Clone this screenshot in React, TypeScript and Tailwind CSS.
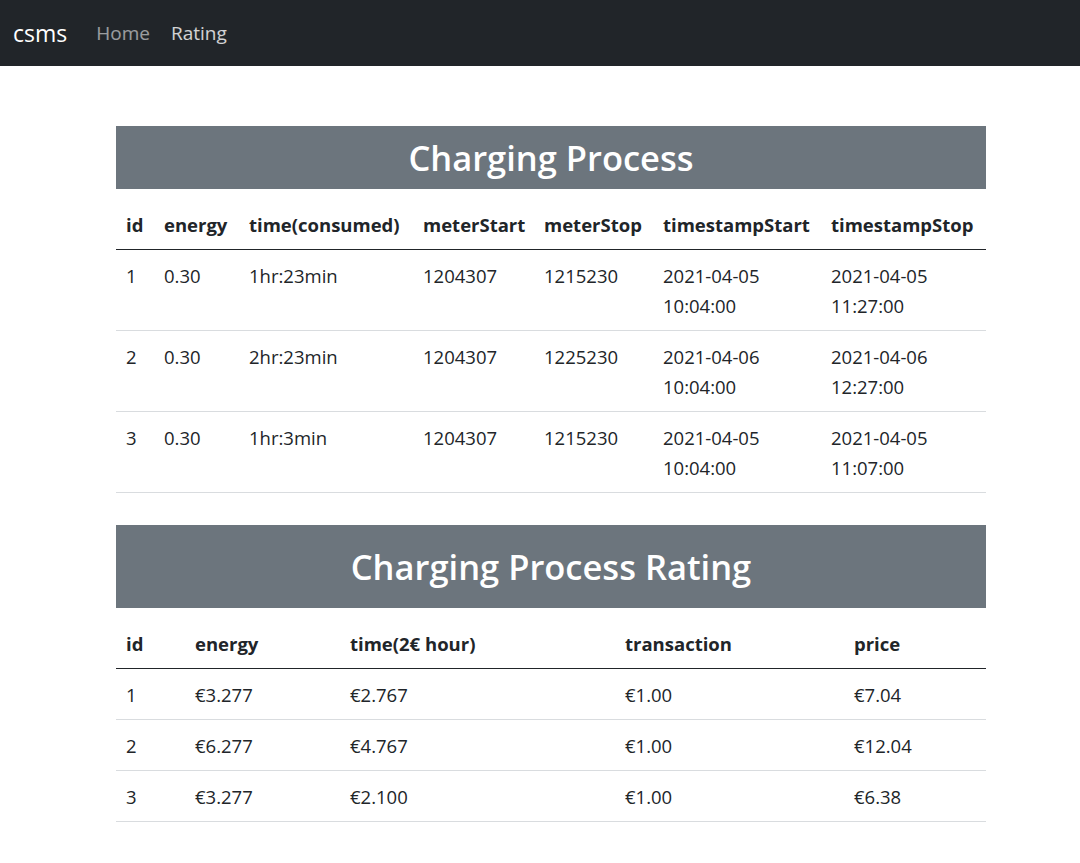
import React from "react";

const processRows = [
  { id: 1, energy: "0.30", time: "1hr:23min", meterStart: "1204307", meterStop: "1215230", start: ["2021-04-05", "10:04:00"], stop: ["2021-04-05", "11:27:00"] },
  { id: 2, energy: "0.30", time: "2hr:23min", meterStart: "1204307", meterStop: "1225230", start: ["2021-04-06", "10:04:00"], stop: ["2021-04-06", "12:27:00"] },
  { id: 3, energy: "0.30", time: "1hr:3min", meterStart: "1204307", meterStop: "1215230", start: ["2021-04-05", "10:04:00"], stop: ["2021-04-05", "11:07:00"] },
];

const ratingRows = [
  { id: 1, energy: "€3.277", time: "€2.767", transaction: "€1.00", price: "€7.04" },
  { id: 2, energy: "€6.277", time: "€4.767", transaction: "€1.00", price: "€12.04" },
  { id: 3, energy: "€3.277", time: "€2.100", transaction: "€1.00", price: "€6.38" },
];

const th = "px-[10px] pt-[11px] pb-[9px] text-left align-bottom font-bold leading-[30px]";
const td = "px-[10px] pt-[11px] pb-[9px] align-top leading-[30px]";

export default function App() {
  return (
    <div className="min-h-[863px] bg-white text-[18.5px] text-[#212529] [font-family:'Open_Sans',sans-serif]">
      {/* navbar */}
      <nav className="flex h-[66px] items-center bg-[#212529] px-[13px]">
        <a className="mr-[29px] text-[23px] text-white" href="#">
          csms
        </a>
        <div className="flex gap-[21px] text-[19px]">
          <a className="text-white/55" href="#">
            Home
          </a>
          <a className="text-white/80" href="#">
            Rating
          </a>
        </div>
      </nav>

      <main className="ml-[116px] w-[870px] pt-[60px]">
        {/* Charging Process */}
        <div className="flex h-[63px] items-center justify-center bg-[#6c757d]">
          <h3 className="text-[34.5px] font-semibold leading-[42px] text-white">Charging Process</h3>
        </div>
        <table className="mt-[10px] w-full table-fixed border-collapse">
          <colgroup>
            <col className="w-[38px]" />
            <col className="w-[85px]" />
            <col className="w-[174px]" />
            <col className="w-[121px]" />
            <col className="w-[119px]" />
            <col className="w-[168px]" />
            <col className="w-[165px]" />
          </colgroup>
          <thead>
            <tr className="border-b border-[#212529]">
              <th className={th}>id</th>
              <th className={th}>energy</th>
              <th className={th}>time(consumed)</th>
              <th className={th}>meterStart</th>
              <th className={th}>meterStop</th>
              <th className={th}>timestampStart</th>
              <th className={th}>timestampStop</th>
            </tr>
          </thead>
          <tbody>
            {processRows.map((r) => (
              <tr className="border-b border-[#d9dcdf]" key={r.id}>
                <td className={td}>{r.id}</td>
                <td className={td}>{r.energy}</td>
                <td className={td}>{r.time}</td>
                <td className={td}>{r.meterStart}</td>
                <td className={td}>{r.meterStop}</td>
                <td className={td}>
                  {r.start[0]}
                  <br />
                  {r.start[1]}
                </td>
                <td className={td}>
                  {r.stop[0]}
                  <br />
                  {r.stop[1]}
                </td>
              </tr>
            ))}
          </tbody>
        </table>

        {/* Charging Process Rating */}
        <div className="mt-[32px] flex h-[83px] items-center justify-center bg-[#6c757d]">
          <h3 className="text-[34.5px] font-semibold leading-[42px] text-white">Charging Process Rating</h3>
        </div>
        <table className="mt-[10px] w-full table-fixed border-collapse">
          <colgroup>
            <col className="w-[69px]" />
            <col className="w-[155px]" />
            <col className="w-[275px]" />
            <col className="w-[229px]" />
            <col className="w-[142px]" />
          </colgroup>
          <thead>
            <tr className="border-b border-[#212529]">
              <th className={th}>id</th>
              <th className={th}>energy</th>
              <th className={th}>time(2€ hour)</th>
              <th className={th}>transaction</th>
              <th className={th}>price</th>
            </tr>
          </thead>
          <tbody>
            {ratingRows.map((r) => (
              <tr className="border-b border-[#d9dcdf]" key={r.id}>
                <td className={td}>{r.id}</td>
                <td className={td}>{r.energy}</td>
                <td className={td}>{r.time}</td>
                <td className={td}>{r.transaction}</td>
                <td className={td}>{r.price}</td>
              </tr>
            ))}
          </tbody>
        </table>
      </main>
    </div>
  );
}
